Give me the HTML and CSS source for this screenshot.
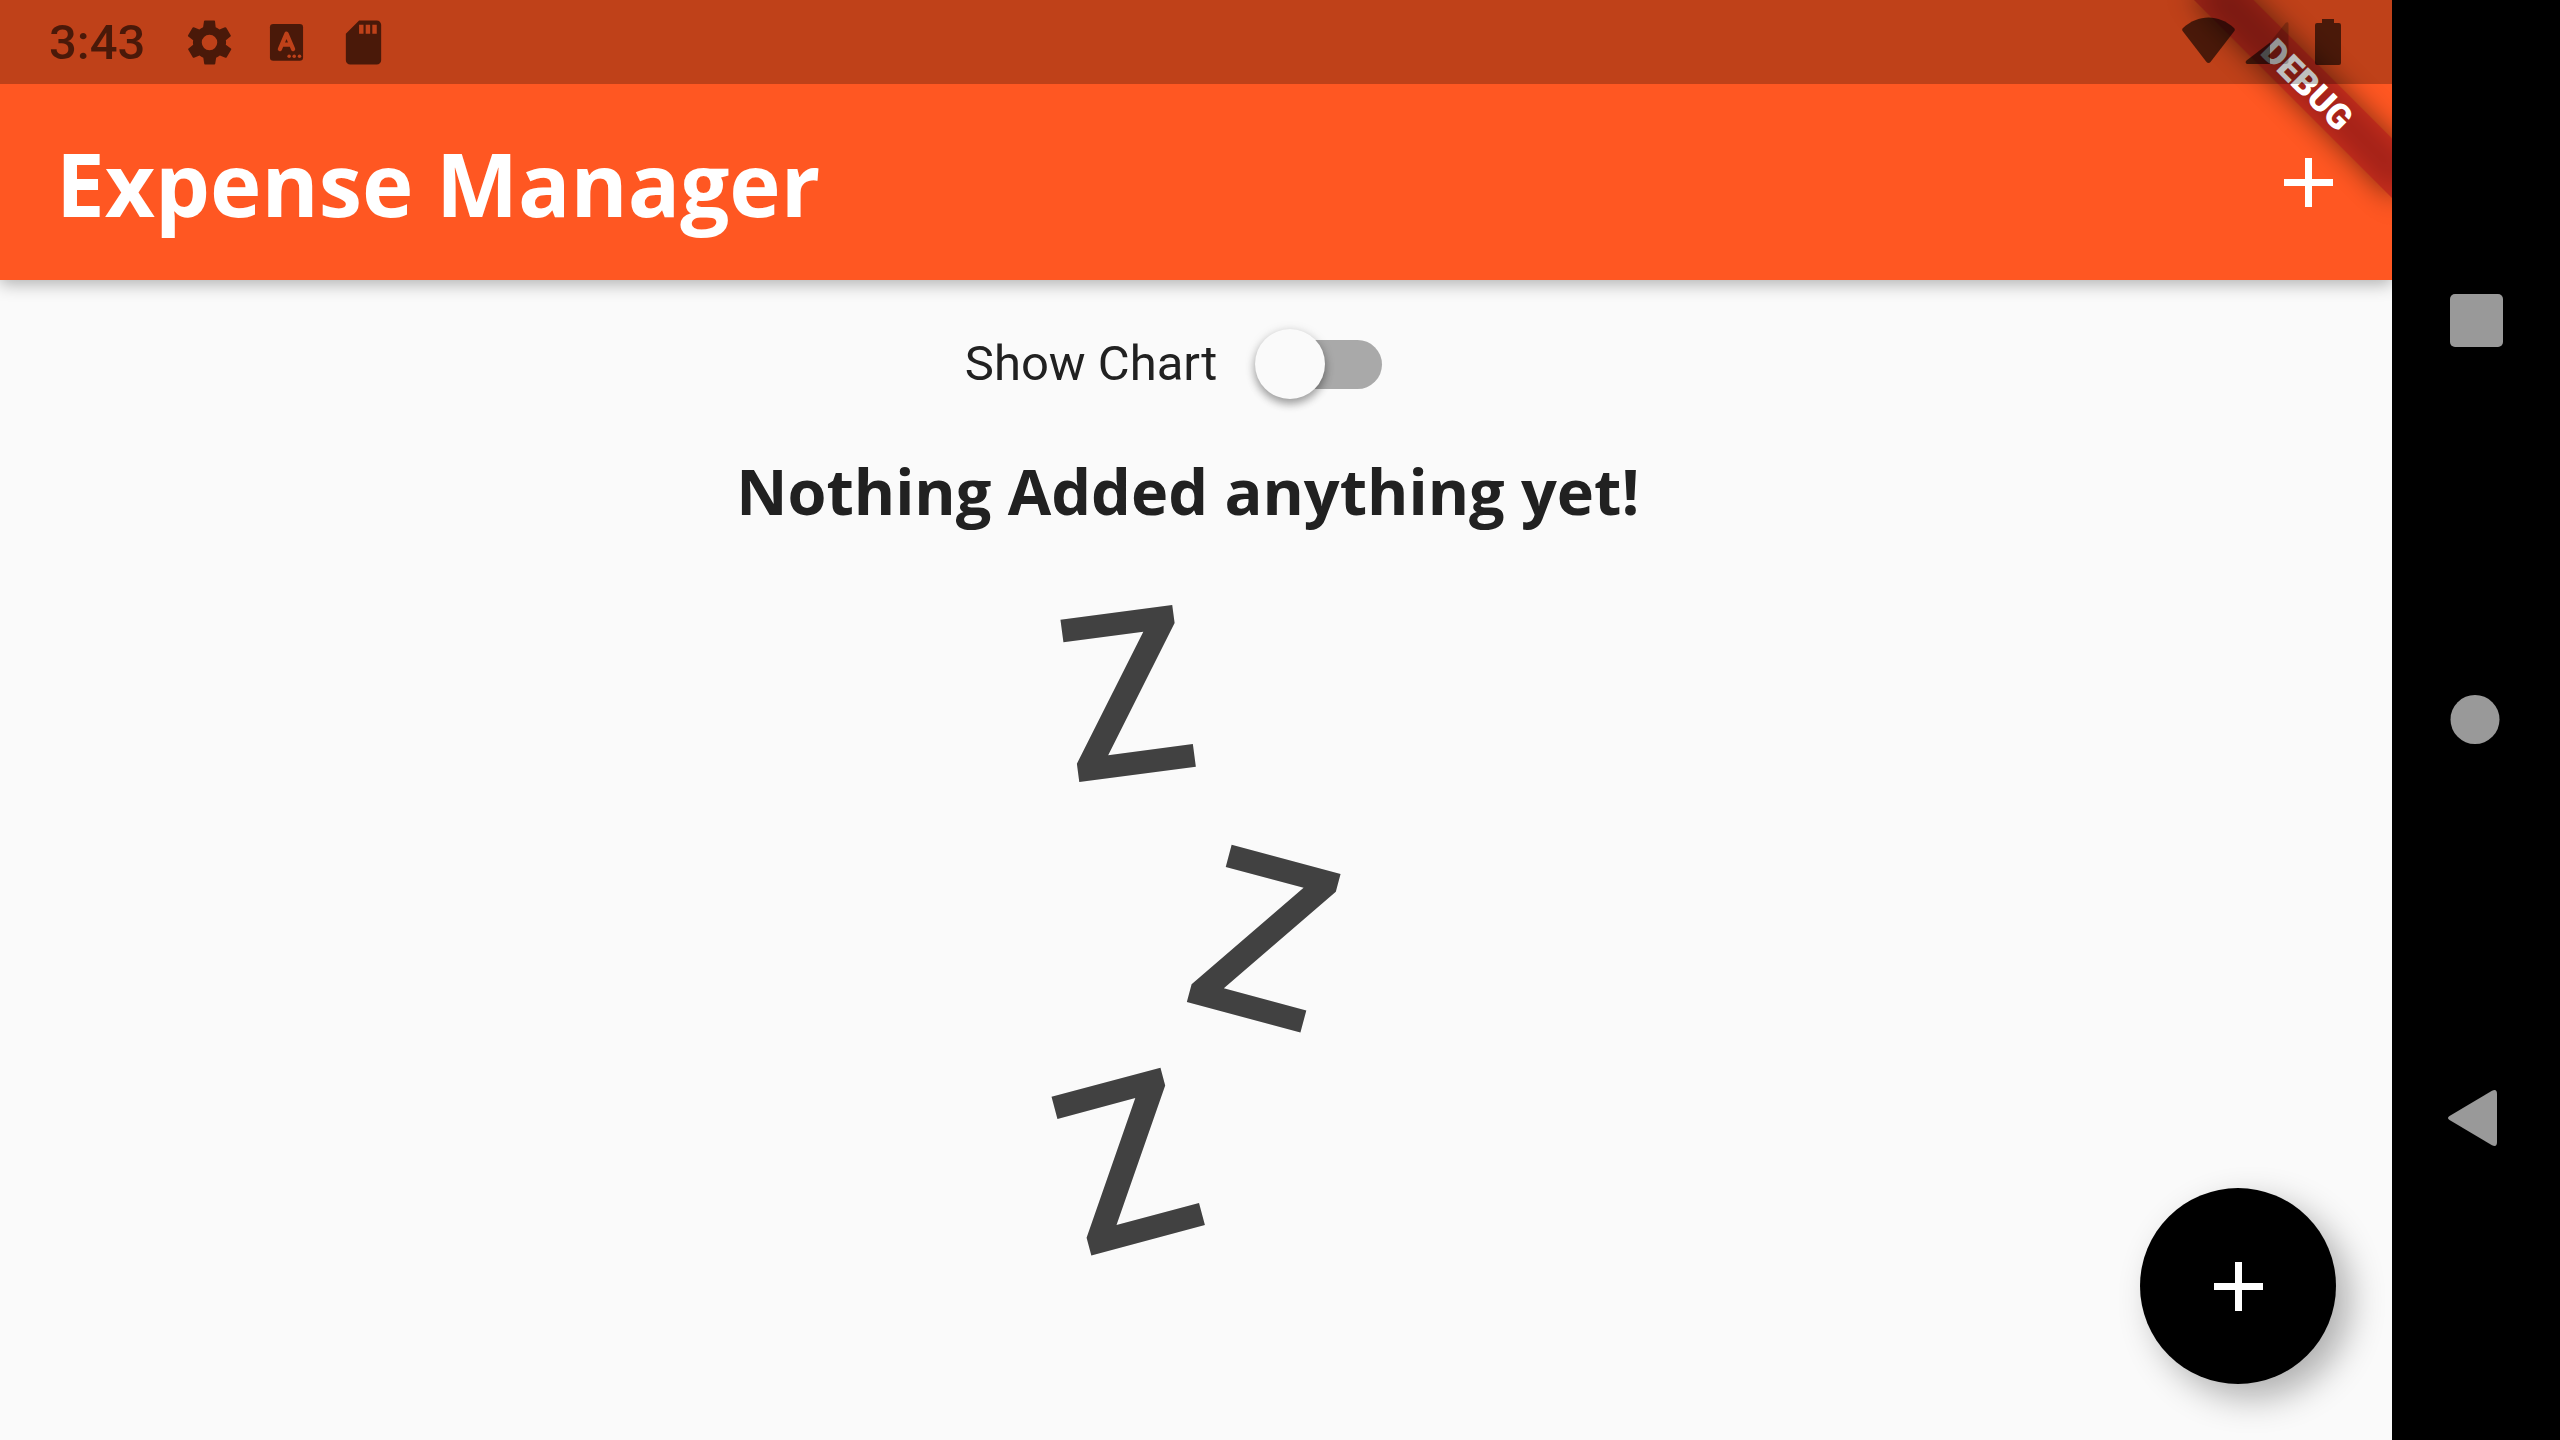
FILE: index.html
```
<!DOCTYPE html>
<html lang="en">
<head>
<meta charset="utf-8">
<meta name="viewport" content="width=device-width, initial-scale=1">
<title>Expense Manager</title>
<link rel="stylesheet" href="styles.css">
</head>
<body>
<div class="app">
  <header class="header">
    <div class="status-bar">
      <div class="status-group">
        <time class="clock">3:43</time>
        <svg class="status-icon" viewBox="0 0 24 24" aria-hidden="true"><path d="M19.5 12c0-.3 0-.6-.1-1l2.100-1.700c.2-.1.2-.4.1-.6l-2-3.400c-.1-.2-.4-.3-.6-.2l-2.500 1c-.5-.4-1.100-.7-1.700-1L14.500 2.400c0-.2-.2-.4-.5-.4h-4c-.2 0-.5.2-.5.4l-.4 2.700c-.6.2-1.100.6-1.700 1l-2.500-1c-.2-.1-.5 0-.6.200l-2 3.400c-.1.2-.1.5.1.600L4.600 11c-.1.400-.1.700-.1 1s0 .6.1 1l-2.100 1.700c-.2.1-.2.4-.1.600l2 3.400c.1.200.4.300.6.200l2.500-1c.5.400 1.100.7 1.700 1l.4 2.700c0 .200.2.400.5.400h4c.2 0 .5-.2.5-.4l.4-2.700c.6-.2 1.100-.6 1.700-1l2.500 1c.2.100.5 0 .6-.2l2-3.400c.1-.2.1-.5-.1-.6L19.400 13c.1-.4.1-.7.1-1zM12 15.500a3.500 3.500 0 1 1 0-7 3.500 3.500 0 0 1 0 7z"/></svg>
        <svg class="status-icon" viewBox="0 0 24 24" aria-hidden="true"><mask id="keyboard-mark"><path fill="#fff" d="M0 0h24v24H0z"/><path fill="none" stroke="#000" stroke-width="1.900" stroke-linecap="round" stroke-linejoin="round" d="M9 15l3-7 3 7M10 13h4"/><g fill="#000"><circle cx="13.200" cy="18.200" r=".8"/><circle cx="15.500" cy="18.200" r=".8"/><circle cx="17.900" cy="18.200" r=".8"/></g></mask><rect x="4.500" y="3.600" width="15" height="16.700" rx="1.500" mask="url(#keyboard-mark)"/></svg>
        <svg class="status-icon" viewBox="0 0 24 24" aria-hidden="true"><path fill-rule="evenodd" d="M18 2h-8L4 8v12c0 1.100.9 2 2 2h12c1.100 0 2-.9 2-2V4c0-1.100-.9-2-2-2zM10 4h2v4h-2zm3 0h2v4h-2zm3 0h2v4h-2z"/></svg>
      </div>
      <div class="status-group status-group-end">
        <svg class="status-icon" viewBox="0 0 53 53" aria-hidden="true"><path d="M1 12C16-2 37-2 52 12c1 1 1 2 .4 3L28.500 46c-1 1.200-3 1.200-4 0L.6 15C0 14 0 13 1 12z"/></svg>
        <svg class="status-icon" viewBox="0 0 53 53" aria-hidden="true"><path d="M27 26.500V48H5c-2.500 0-3-2-1.500-3.500z"/><path opacity=".35" d="M27 26.500V48h16c1.500 0 2.500-1 2.500-2.500V8c0-2-1.500-2.500-3-1z"/></svg>
        <svg class="status-icon status-icon-battery" viewBox="0 0 26 53" aria-hidden="true"><path d="M7 3h12v4h5a2 2 0 0 1 2 2v38a2 2 0 0 1-2 2H2a2 2 0 0 1-2-2V9a2 2 0 0 1 2-2h5z"/></svg>
      </div>
    </div>
    <div class="toolbar">
      <h1 class="title">Expense Manager</h1>
      <button class="icon-button" type="button" aria-label="Add expense"><svg class="plus" viewBox="0 0 49 49" aria-hidden="true"><path d="M21 0h7v21h21v7H28v21h-7V28H0v-7h21z"/></svg></button>
    </div>
    <svg class="debug-banner" viewBox="-280 0 280 280" role="img" aria-label="Debug">
      <filter id="soft" x="-50%" y="-200%" width="200%" height="500%"><feGaussianBlur stdDeviation="14"/></filter>
      <g transform="rotate(45)">
        <rect x="-140" y="98" width="280" height="42" opacity=".5" filter="url(#soft)"/>
        <rect x="-280" y="98" width="560" height="42" fill="#b71c1c" fill-opacity=".63"/>
        <text class="debug-text" x="0" y="132">DEBUG</text>
      </g>
    </svg>
  </header>
  <main class="content">
    <label class="switch-row">Show Chart<input class="switch" type="checkbox" role="switch"></label>
    <h2 class="message">Nothing Added anything yet! </h2>
    <svg class="sleep" viewBox="0 0 288 652" role="img" aria-label="Sleeping">
      <text transform="translate(75 89) rotate(-7.5)" y="82">Z</text>
      <text transform="translate(213 334) rotate(15)" y="82">Z</text>
      <text transform="translate(75 557) rotate(-15)" y="82">Z</text>
    </svg>
  </main>
  <button class="fab" type="button" aria-label="Add expense"><svg class="plus" viewBox="0 0 49 49" aria-hidden="true"><path d="M21 0h7v21h21v7H28v21h-7V28H0v-7h21z"/></svg></button>
</div>
<nav class="system-nav" aria-label="System">
  <button class="nav-button" type="button" aria-label="Recent apps"><svg viewBox="0 0 56 56" aria-hidden="true"><rect x="2" y="1" width="53" height="53" rx="5"/></svg></button>
  <button class="nav-button" type="button" aria-label="Home"><svg viewBox="0 0 56 56" aria-hidden="true"><circle cx="27" cy="27.500" r="24.500"/></svg></button>
  <button class="nav-button" type="button" aria-label="Back"><svg viewBox="0 0 56 56" aria-hidden="true"><path d="M1.500 25L44 -.2Q49-2.500 49 3v48q0 5.500-5 3.200L1.500 29q-3-2 0-4z"/></svg></button>
</nav>
</body>
</html>
```
FILE: styles.css
```
* {
  box-sizing: border-box;
}

body {
  margin: 0;
  min-height: 100vh;
  display: flex;
  background: #000;
  color: #212121;
  font-family: Roboto, sans-serif;
}

button {
  padding: 0;
  border: 0;
  background: none;
  cursor: pointer;
}

svg {
  display: block;
}

.app {
  position: relative;
  flex: 1;
  min-width: 0;
  display: flex;
  flex-direction: column;
  overflow: hidden;
  background: #fafafa;
}

.header {
  position: relative;
  background: #ff5722;
  box-shadow: 0 4px 16px rgba(0, 0, 0, 0.3);
}

.status-bar {
  position: relative;
  z-index: 2;
  height: 84px;
  padding: 0 51px 0 49px;
  display: flex;
  align-items: center;
  justify-content: space-between;
  background: rgba(0, 0, 0, 0.25);
  color: rgba(0, 0, 0, 0.61);
}

.status-group {
  display: flex;
  align-items: center;
  gap: 24px;
}

.status-group-end {
  gap: 8px;
}

.clock {
  margin-right: 14px;
  padding-top: 2px;
  font-size: 49px;
  font-weight: 500;
  line-height: 56px;
}

.status-icon {
  width: 53px;
  height: 53px;
  fill: currentColor;
}

.status-icon-battery {
  width: 26px;
  margin-left: 11px;
}

.toolbar {
  height: 196px;
  padding: 0 28px 0 56px;
  display: flex;
  align-items: center;
  justify-content: space-between;
  color: #fff;
}

.title {
  margin: 0;
  padding-top: 2px;
  font: 700 87px/120px "Open Sans", sans-serif;
}

.icon-button {
  width: 112px;
  height: 112px;
  display: grid;
  place-items: center;
  color: #fff;
}

.plus {
  width: 49px;
  height: 49px;
  fill: currentColor;
}

.debug-banner {
  position: absolute;
  z-index: 1;
  top: 0;
  right: 0;
  width: 280px;
  height: 280px;
  pointer-events: none;
}

.debug-text {
  fill: #fff;
  font: 900 35px Roboto, sans-serif;
  text-anchor: middle;
}

.content {
  display: flex;
  flex-direction: column;
  align-items: center;
}

.switch-row {
  height: 168px;
  display: flex;
  align-items: center;
  font-size: 49px;
  line-height: 56px;
}

.switch {
  appearance: none;
  position: relative;
  width: 116px;
  height: 49px;
  margin: 0 45px 0 49px;
  border-radius: 25px;
  background: #a9a9a9;
}

.switch::before {
  content: "";
  position: absolute;
  top: -11px;
  left: -11px;
  width: 70px;
  height: 70px;
  border-radius: 50%;
  background: #fafafa;
  box-shadow: 0 5px 8px rgba(0, 0, 0, 0.3), 0 2px 12px rgba(0, 0, 0, 0.15);
}

.switch:checked {
  background: #ffab91;
}

.switch:checked::before {
  left: 57px;
  background: #ff5722;
}

.message {
  margin: 0 0 70px;
  font: 700 63px/86px "Open Sans", sans-serif;
  white-space: pre;
}

.sleep {
  width: 288px;
  height: 652px;
  overflow: visible;
  fill: #414141;
  font: 600 229px "Open Sans", sans-serif;
  text-anchor: middle;
}

.fab {
  position: absolute;
  right: 56px;
  bottom: 56px;
  width: 196px;
  height: 196px;
  display: grid;
  place-items: center;
  border-radius: 50%;
  background: #000;
  color: #fff;
  box-shadow: 14px 14px 35px rgba(0, 0, 0, 0.3);
}

.system-nav {
  width: 168px;
  display: grid;
  grid-template-rows: repeat(3, 399px);
  align-content: center;
  background: #000;
}

.nav-button {
  display: grid;
  place-items: center;
}

.nav-button svg {
  width: 56px;
  height: 56px;
  overflow: visible;
  fill: #999;
}
```
